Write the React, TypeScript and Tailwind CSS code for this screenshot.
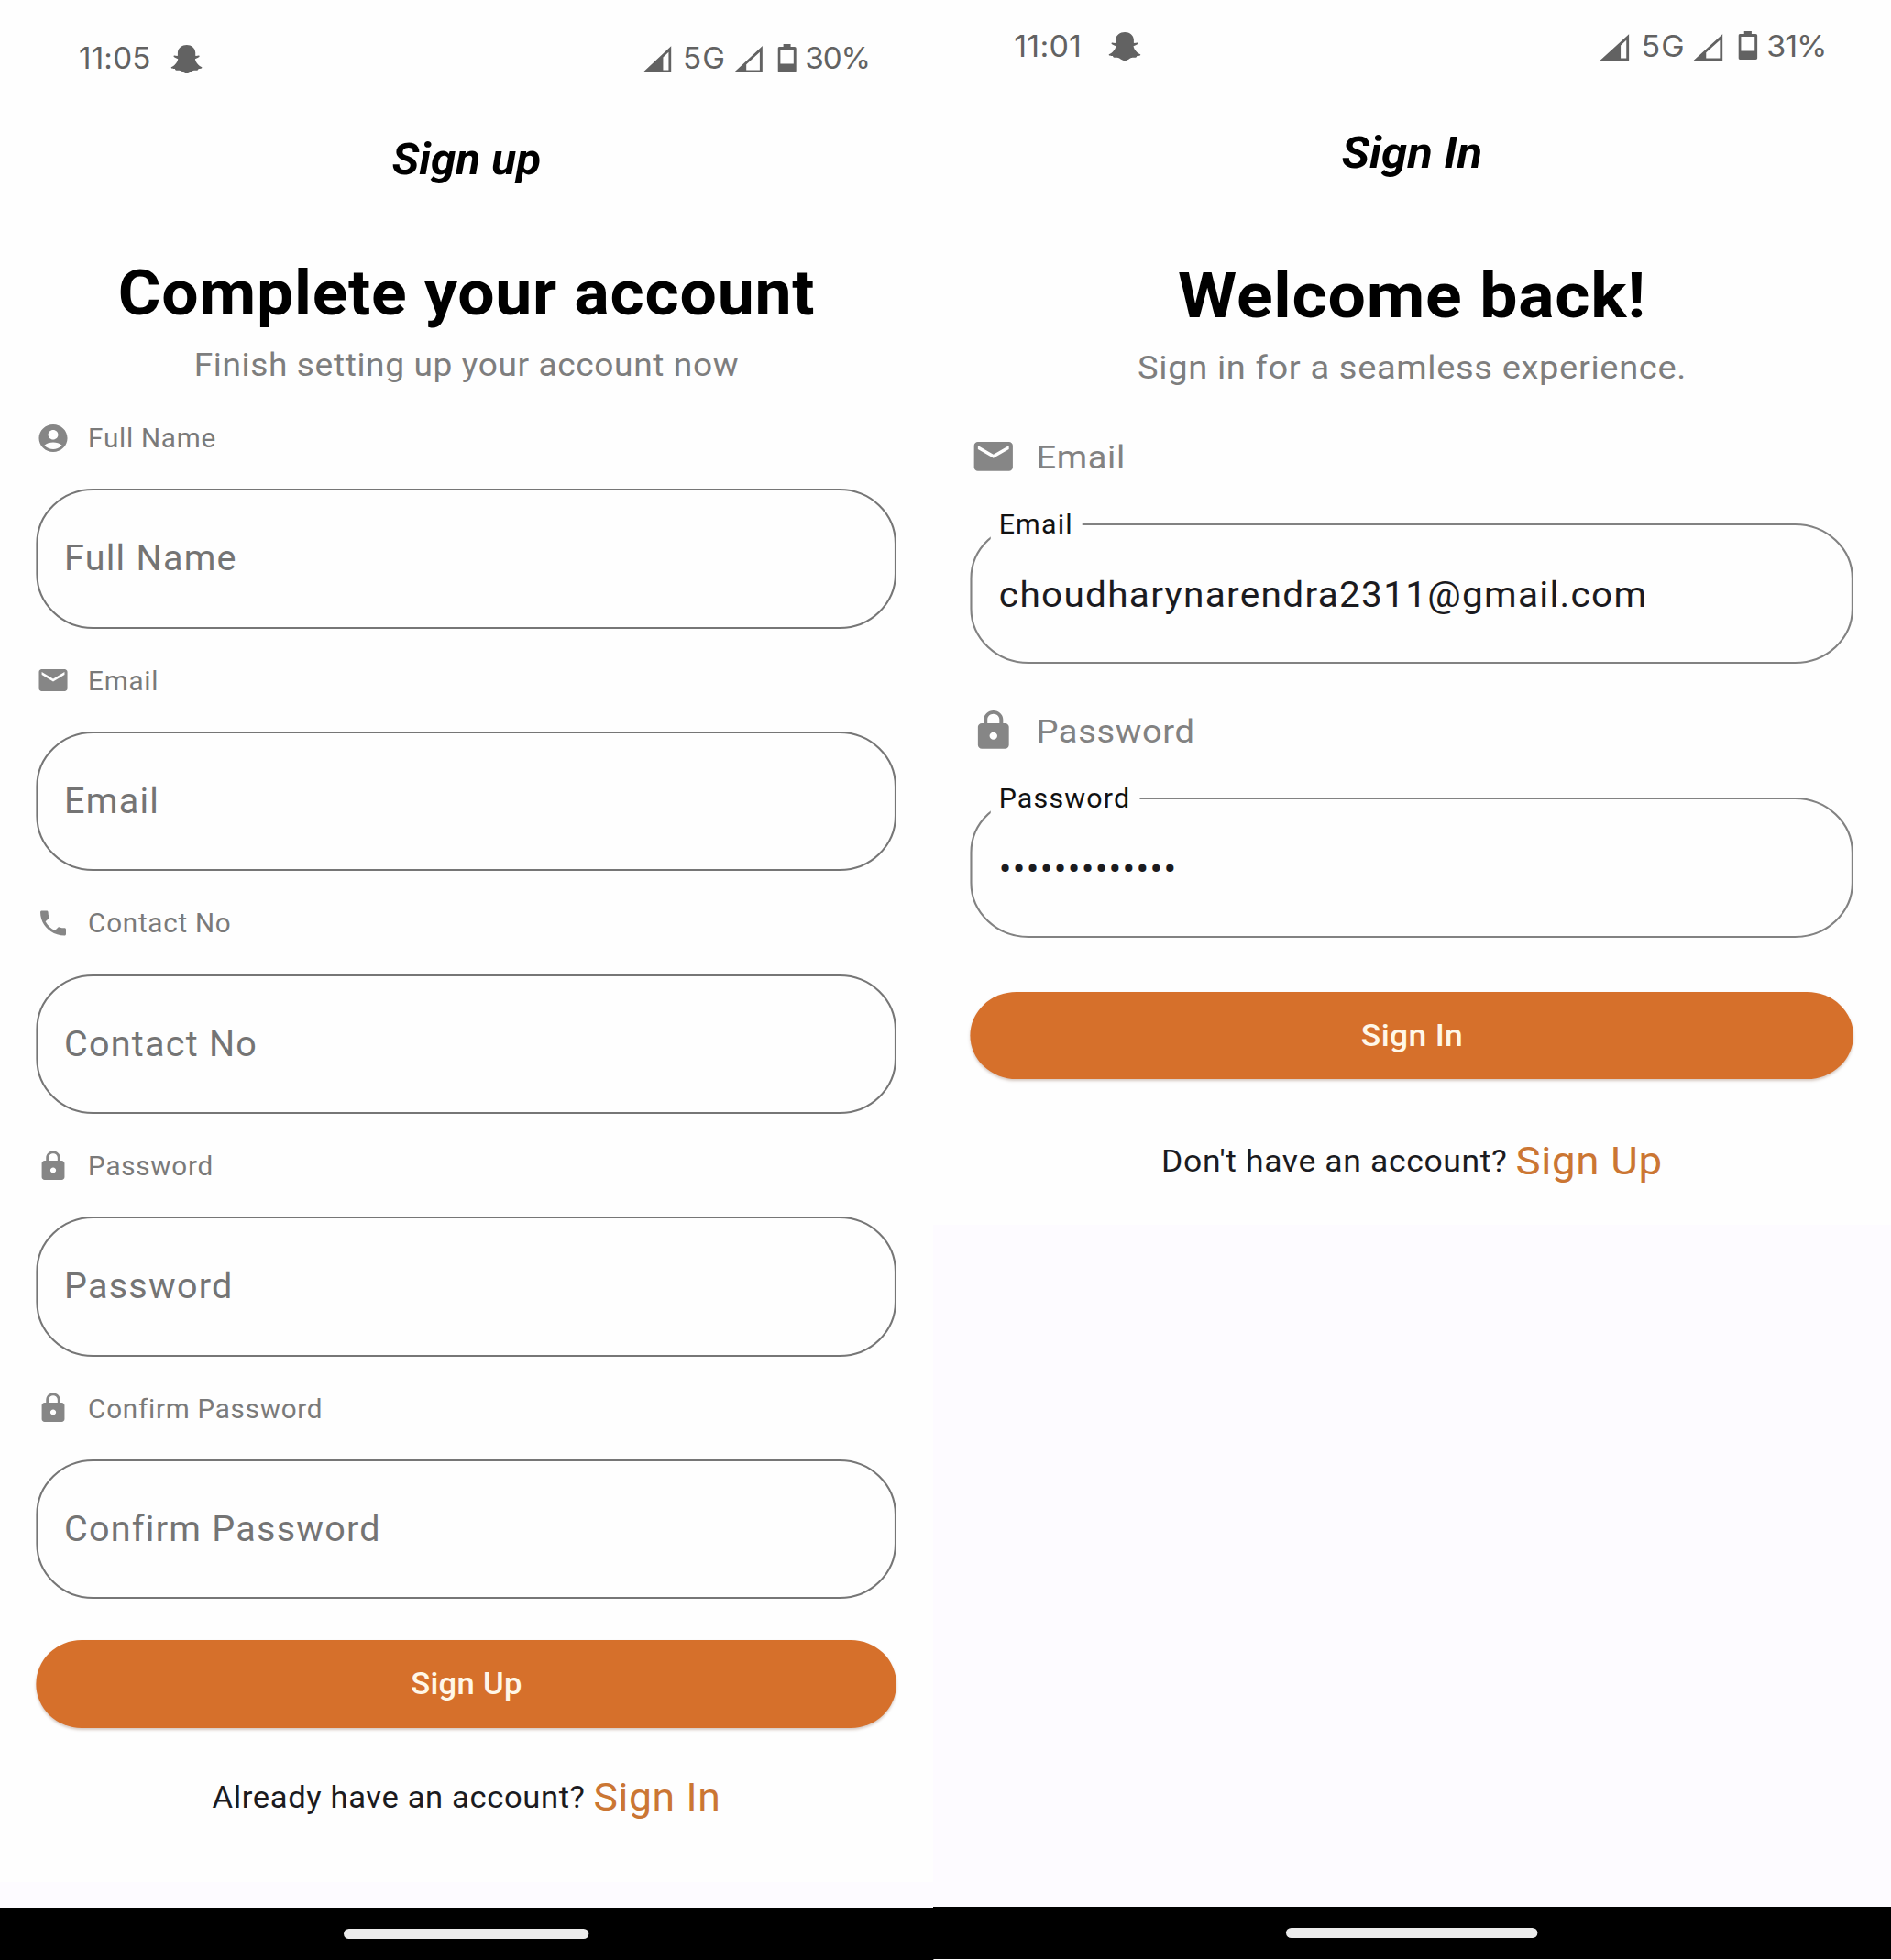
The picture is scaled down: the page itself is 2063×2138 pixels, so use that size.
import React from "react";
import { MdEmail, MdLock, MdPhone } from "react-icons/md";

type IconProps = { className?: string };

function AccountIcon({ className }: IconProps) {
  return (
    <svg viewBox="0 0 24 24" fill="currentColor" className={className}>
      <path d="M12 2C6.48 2 2 6.48 2 12s4.48 10 10 10 10-4.48 10-10S17.52 2 12 2zm0 4c1.93 0 3.5 1.57 3.5 3.5S13.93 13 12 13s-3.5-1.57-3.5-3.5S10.07 6 12 6zm0 14c-2.03 0-4.43-.82-6.14-2.88C7.55 15.8 9.68 15 12 15s4.45.8 6.14 2.12C16.43 19.18 14.03 20 12 20z" />
    </svg>
  );
}

function GhostIcon() {
  return (
    <svg viewBox="0 0 101 94" preserveAspectRatio="none" fill="currentColor" className="mt-[2px] h-[31px] w-[33px] shrink-0">
      <path d="M51 0C66 0 78 10 79 25L79 36C83 37 88 34 91 35C94 38 91 41 85 43L78 46C80 58 90 70 101 74C101 78 94 78 89 79C87 85 84 85 75 84C67 84 62 94 51 94C40 94 35 84 27 84C18 85 15 85 13 79C8 78 0 78 0 74C11 70 21 58 23 46L16 43C10 41 7 38 10 35C13 34 18 37 22 36L22 25C23 10 36 0 51 0Z" />
    </svg>
  );
}

function SignalIcon({ strong }: { strong?: boolean }) {
  return (
    <svg viewBox="0 0 93 90" preserveAspectRatio="none" fill="currentColor" className="mt-[3px] h-[29px] w-[30px] shrink-0">
      {strong ? (
        <path fillRule="evenodd" d="M93 0V90H0ZM84 21L66 39V82H84Z" />
      ) : (
        <path fillRule="evenodd" d="M93 0V90H0ZM84 21L40 63V82H84Z" />
      )}
    </svg>
  );
}

function BatteryIcon() {
  return (
    <svg viewBox="0 0 56 92" preserveAspectRatio="none" fill="currentColor" className="ml-[16px] h-[31px] w-[19.5px] shrink-0">
      <path
        fillRule="evenodd"
        d="M17 0H39V9H51Q56 9 56 14V87Q56 92 51 92H5Q0 92 0 87V14Q0 9 5 9H17ZM8 18V64H48V18Z"
      />
    </svg>
  );
}

function StatusBar({ time, battery, className }: { time: string; battery: string; className: string }) {
  return (
    <div className={`flex items-center pr-[66.5px] pl-[83px] font-['Inter',sans-serif] text-[32px] leading-none text-[#626262] ${className}`}>
      <span className="w-[97px] shrink-0 pt-[2.5px] tracking-[0.2px]">{time}</span>
      <GhostIcon />
      <div className="ml-auto flex items-center">
        <SignalIcon strong />
        <span className="w-[66px] shrink-0 pt-[2.5px] pl-[12px] tracking-[1px]">5G</span>
        <SignalIcon />
        <BatteryIcon />
        <span className="ml-[9px] pt-[2.5px] tracking-[-1px]">{battery}</span>
      </div>
    </div>
  );
}

function SubmitButton({ label, className }: { label: string; className: string }) {
  return (
    <button
      className={`block h-[95.5px] w-full rounded-full bg-[#d6702b] text-center text-[33.4px] leading-[96px] font-medium tracking-[0.3px] text-[#fff7e8] shadow-[0_2px_3px_rgba(90,40,10,0.25)] ${className}`}
    >
      {label}
    </button>
  );
}

function Footer({ text, link, className }: { text: string; link: string; className: string }) {
  return (
    <div className={`flex h-[50px] items-center justify-center gap-[8.5px] ${className}`}>
      <span className="pt-[2px] text-[33.4px] leading-[50px] tracking-[0.6px] text-[#1b1b1f]">{text}</span>
      <a className="text-[42.9px] leading-[50px] tracking-[0.65px] text-[#cb7633]">{link}</a>
    </div>
  );
}

function NavBar({ className }: { className: string }) {
  return (
    <div className={`mt-auto flex shrink-0 items-center justify-center bg-black ${className}`}>
      <div className="h-[10.5px] w-[258px] rounded-full bg-[#ebebeb]" />
    </div>
  );
}

const signUpFields = [
  { label: "Full Name", Icon: AccountIcon },
  { label: "Email", Icon: MdEmail },
  { label: "Contact No", Icon: MdPhone },
  { label: "Password", Icon: MdLock },
  { label: "Confirm Password", Icon: MdLock },
];

const signInFields = [
  { label: "Email", value: "choudharynarendra2311@gmail.com", Icon: MdEmail, notch: "w-[94px]" },
  { label: "Password", value: "•••••••••••••", Icon: MdLock, notch: "w-[152.6px]" },
];

function SignUpScreen() {
  return (
    <div className="flex h-[2138px] w-[982.6px] origin-top-left scale-x-[1.036] flex-col bg-[#fdfbff]">
      <div className="h-[2053px] bg-[#fefefe]">
        <StatusBar time="11:05" battery="30%" className="h-[126px]" />
        <div className="pt-px text-center text-[47.7px] leading-[94.4px] font-bold text-black italic">Sign up</div>
        <h1 className="mt-[58.4px] text-center text-[69px] leading-[80px] font-bold tracking-[0.74px] text-black">
          Complete your account
        </h1>
        <p className="mt-[17.6px] text-center text-[35.8px] leading-[42px] tracking-[0.6px] text-[#7e7e7e]">
          Finish setting up your account now
        </p>
        <div className="mt-[41px] flex flex-col gap-[39.4px] px-[38.2px]">
          {signUpFields.map(({ label, Icon }) => (
            <div key={label}>
              <div className="flex h-[36px] items-center gap-[18.6px]">
                <Icon className="-mt-[1.5px] size-[36px] shrink-0 text-[#868686]" />
                <span className="text-[28.6px] leading-[35px] tracking-[0.72px] text-[#7a7a7a]">{label}</span>
              </div>
              <div className="mt-[36.8px] flex h-[152.5px] items-center rounded-[60px] border-2 border-[#767676] px-[27.4px] pt-px text-[38.16px] tracking-[1.2px] text-[#747474]">
                {label}
              </div>
            </div>
          ))}
        </div>
        <div className="px-[38.2px]">
          <SubmitButton label="Sign Up" className="mt-[45px]" />
        </div>
        <Footer text="Already have an account?" link="Sign In" className="mt-[50.2px]" />
      </div>
      <NavBar className="h-[57px]" />
    </div>
  );
}

function SignInScreen() {
  return (
    <div className="flex h-[2137px] w-[982.6px] origin-top-left scale-x-[1.0635] flex-col bg-[#fdfbff]">
      <div className="h-[1336px] bg-[#fefefe]">
        <StatusBar time="11:01" battery="31%" className="h-[99px]" />
        <div className="text-center text-[47.7px] leading-[136px] font-bold text-black italic">Sign In</div>
        <h1 className="mt-[47.8px] text-center text-[69px] leading-[80px] font-bold tracking-[0.7px] text-black">
          Welcome back!
        </h1>
        <p className="mt-[17px] text-center text-[35.8px] leading-[42px] tracking-[0.6px] text-[#7e7e7e]">
          Sign in for a seamless experience.
        </p>
        <div className="mt-[53px] flex flex-col gap-[50.7px] px-[38.2px]">
          {signInFields.map(({ label, value, Icon, notch }) => (
            <div key={label}>
              <div className="flex h-[48px] items-center gap-[19.8px]">
                <Icon className="-mt-[2px] size-[47.7px] shrink-0 text-[#868686]" />
                <span className="text-[35.8px] leading-[48px] tracking-[0.6px] text-[#828282]">{label}</span>
              </div>
              <div className="relative mt-[47.8px] flex h-[153px] items-center rounded-[60px] border-2 border-[#828282] px-[27.4px] pt-[4.5px] text-[38.16px] tracking-[1.2px] text-[#1b1b1f]">
                {value}
                <span
                  className={`absolute -top-[19px] left-[18.8px] h-[36px] bg-[#fefefe] pl-[8.4px] text-[28.6px] leading-[36px] tracking-[1.1px] whitespace-nowrap text-[#111111] ${notch}`}
                >
                  {label}
                </span>
              </div>
            </div>
          ))}
        </div>
        <div className="px-[38.2px]">
          <SubmitButton label="Sign In" className="mt-[58.9px]" />
        </div>
        <Footer text="Don't have an account?" link="Sign Up" className="mt-[63.5px]" />
      </div>
      <NavBar className="h-[57.5px]" />
    </div>
  );
}

export default function App() {
  return (
    <div className="flex h-[2138px] w-[2063px] overflow-hidden bg-white font-['Roboto',sans-serif]">
      <div className="w-[1018px] shrink-0">
        <SignUpScreen />
      </div>
      <div className="w-[1045px] shrink-0">
        <SignInScreen />
      </div>
    </div>
  );
}
